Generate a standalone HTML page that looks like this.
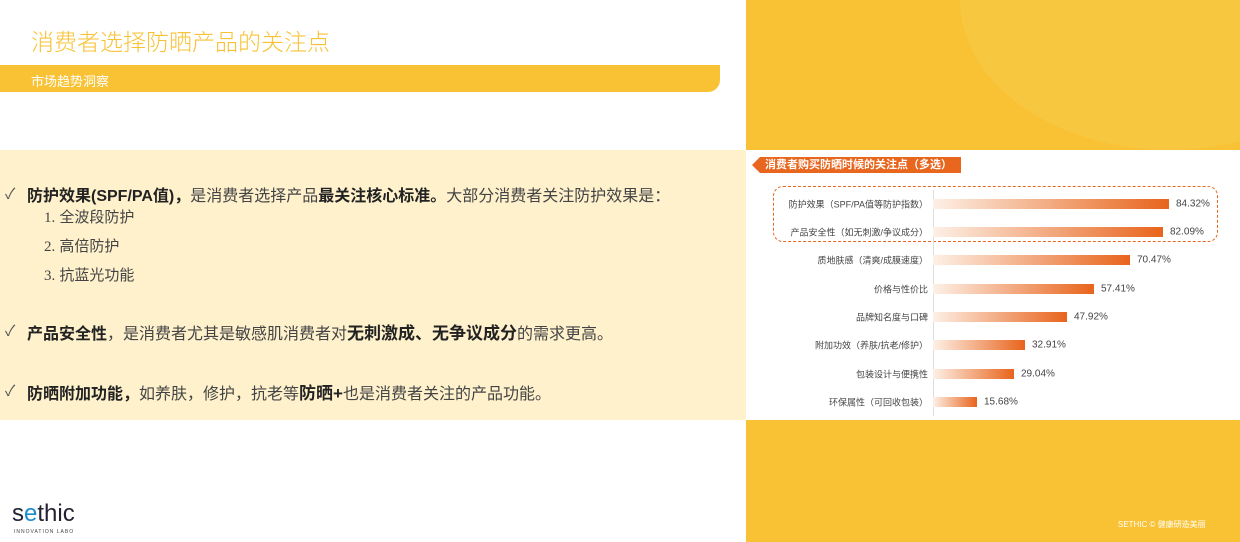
<!DOCTYPE html><html><head><meta charset="utf-8"><style>
body{margin:0;width:1240px;height:542px;position:relative;overflow:hidden;background:#fff;font-family:"Liberation Sans","Noto Sans CJK SC",sans-serif}
.a{position:absolute}
.t{font-size:16px;color:#444;white-space:nowrap}
.t b{font-weight:bold;color:#222}
.ck{position:absolute;left:5px;color:#555;font-size:15px}
.lab{position:absolute;right:312px;font-size:9px;color:#444;white-space:nowrap;transform:translateY(-50%)}
.bar{position:absolute;left:933px;height:10px;background:linear-gradient(90deg,#fdf0e6,#e8641c);transform:translateY(-50%)}
.val{position:absolute;font-size:10px;color:#444;transform:translateY(-50%)}
</style></head><body>
<div class="a" style="left:746px;top:0;width:494px;height:542px;background:#F8C234"></div>
<div class="a" style="left:960px;top:-150px;width:420px;height:300px;border-radius:50%;background:#f9c94a;opacity:.6"></div>
<div class="a" style="left:746px;top:150px;width:494px;height:270px;background:#fff"></div>
<div class="a" style="left:31px;top:23px;font-size:23px;color:#F8C234;font-weight:300">消费者选择防晒产品的关注点</div>
<div class="a" style="left:0;top:65px;width:720px;height:27px;background:#F8C234;border-radius:0 0 12px 0"></div>
<div class="a" style="left:31px;top:71px;font-size:13px;color:#fff">市场趋势洞察</div>
<div class="a" style="left:0;top:150px;width:746px;height:270px;background:#FEF1CC"></div>
<div class="ck" style="top:183px">✓</div><div class="a t" style="left:27px;top:182px"><b>防护效果(SPF/PA值)，</b>是消费者选择产品<b>最关注核心标准。</b>大部分消费者关注防护效果是：</div>
<div class="a t" style="left:44px;top:206px;font-size:15px"><span style="font-family:'Liberation Serif'">1.</span> 全波段防护</div>
<div class="a t" style="left:44px;top:235px;font-size:15px"><span style="font-family:'Liberation Serif'">2.</span> 高倍防护</div>
<div class="a t" style="left:44px;top:264px;font-size:15px"><span style="font-family:'Liberation Serif'">3.</span> 抗蓝光功能</div>
<div class="ck" style="top:320px">✓</div><div class="a t" style="left:27px;top:319px"><b>产品安全性</b>，是消费者尤其是敏感肌消费者对<b style="font-size:17px">无刺激成、无争议成分</b>的需求更高。</div>
<div class="ck" style="top:380px">✓</div><div class="a t" style="left:27px;top:379px"><b>防晒附加功能，</b>如养肤，修护，抗老等<b style="font-size:17px">防晒+</b>也是消费者关注的产品功能。</div>
<div class="a" style="left:752px;top:157px;width:209px;height:16px;background:#E8661E;clip-path:polygon(8px 0,100% 0,100% 100%,8px 100%,0 50%)"></div>
<div class="a" style="left:765px;top:157px;font-size:11px;font-weight:bold;color:#fff;line-height:16px">消费者购买防晒时候的关注点（多选）</div>
<div class="a" style="left:773px;top:186px;width:443px;height:54px;border:1.5px dashed #E8661E;border-radius:10px"></div>
<div class="a" style="left:933px;top:190px;width:1px;height:226px;background:#ddd"></div>
<div class="lab" style="top:204px">防护效果（SPF/PA值等防护指数）</div><div class="bar" style="top:204px;width:236px"></div><div class="val" style="top:204px;left:1176px">84.32%</div>
<div class="lab" style="top:232px">产品安全性（如无刺激/争议成分）</div><div class="bar" style="top:232px;width:230px"></div><div class="val" style="top:232px;left:1170px">82.09%</div>
<div class="lab" style="top:260px">质地肤感（清爽/成膜速度）</div><div class="bar" style="top:260px;width:197px"></div><div class="val" style="top:260px;left:1137px">70.47%</div>
<div class="lab" style="top:289px">价格与性价比</div><div class="bar" style="top:289px;width:161px"></div><div class="val" style="top:289px;left:1101px">57.41%</div>
<div class="lab" style="top:317px">品牌知名度与口碑</div><div class="bar" style="top:317px;width:134px"></div><div class="val" style="top:317px;left:1074px">47.92%</div>
<div class="lab" style="top:345px">附加功效（养肤/抗老/修护）</div><div class="bar" style="top:345px;width:92px"></div><div class="val" style="top:345px;left:1032px">32.91%</div>
<div class="lab" style="top:374px">包装设计与便携性</div><div class="bar" style="top:374px;width:81px"></div><div class="val" style="top:374px;left:1021px">29.04%</div>
<div class="lab" style="top:402px">环保属性（可回收包装）</div><div class="bar" style="top:402px;width:44px"></div><div class="val" style="top:402px;left:984px">15.68%</div>
<div class="a" style="left:12px;top:500px;font-size:24px;color:#223">s<span style="color:#1a8ccf">e</span>thic</div>
<div class="a" style="left:14px;top:529px;font-size:5px;color:#444;letter-spacing:1px">INNOVATION LABO</div>
<div class="a" style="left:1118px;top:519px;font-size:8px;color:#fff">SETHIC © 健康研造美丽</div>
</body></html>
